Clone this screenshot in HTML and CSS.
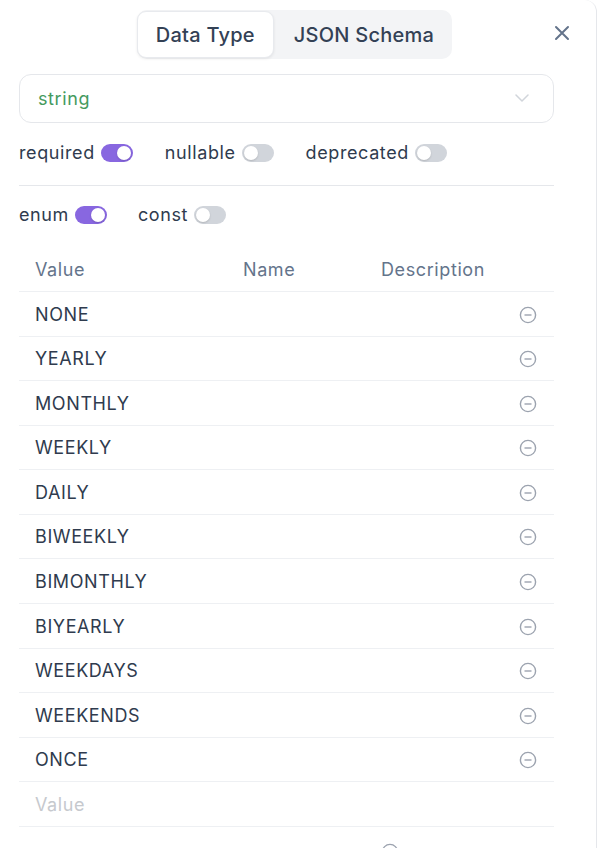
FILE: index.html
```html
<!DOCTYPE html>
<html>
<head>
<meta charset="utf-8">
<link rel="stylesheet" href="styles.css">
</head>
<body>
<div class="panel">
  <div class="header">
    <div class="tabs">
      <div class="tab active">Data Type</div>
      <div class="tab">JSON Schema</div>
    </div>
    <div class="close">
      <svg width="16" height="16" viewBox="0 0 16 16"><path d="M2 2 L14 14 M14 2 L2 14" stroke="#64748b" stroke-width="2" stroke-linecap="round" fill="none"/></svg>
    </div>
  </div>

  <div class="select">
    <span class="select-value">string</span>
    <svg width="14" height="8" viewBox="0 0 14 8"><path d="M1 1 L7 7 L13 1" stroke="#d1d5db" stroke-width="1.5" fill="none" stroke-linecap="round" stroke-linejoin="round"/></svg>
  </div>

  <div class="flags">
    <div class="flag"><span>required</span><span class="toggle on"><span class="knob"></span></span></div>
    <div class="flag"><span>nullable</span><span class="toggle"><span class="knob"></span></span></div>
    <div class="flag"><span>deprecated</span><span class="toggle"><span class="knob"></span></span></div>
  </div>
  <div class="divider"></div>
  <div class="flags second">
    <div class="flag"><span>enum</span><span class="toggle on"><span class="knob"></span></span></div>
    <div class="flag"><span>const</span><span class="toggle"><span class="knob"></span></span></div>
  </div>

  <div class="table">
    <div class="row head">
      <div class="cell">Value</div>
      <div class="cell">Name</div>
      <div class="cell">Description</div>
      <div class="cell"></div>
    </div>
    <div class="row"><div class="cell">NONE</div><div class="cell"></div><div class="cell"></div><div class="cell act"><svg class="minus" viewBox="0 0 18 18"><circle cx="9" cy="9" r="7.6"/><path d="M5.5 9 H12.5"/></svg></div></div>
    <div class="row"><div class="cell">YEARLY</div><div class="cell"></div><div class="cell"></div><div class="cell act"><svg class="minus" viewBox="0 0 18 18"><circle cx="9" cy="9" r="7.6"/><path d="M5.5 9 H12.5"/></svg></div></div>
    <div class="row"><div class="cell">MONTHLY</div><div class="cell"></div><div class="cell"></div><div class="cell act"><svg class="minus" viewBox="0 0 18 18"><circle cx="9" cy="9" r="7.6"/><path d="M5.5 9 H12.5"/></svg></div></div>
    <div class="row"><div class="cell">WEEKLY</div><div class="cell"></div><div class="cell"></div><div class="cell act"><svg class="minus" viewBox="0 0 18 18"><circle cx="9" cy="9" r="7.6"/><path d="M5.5 9 H12.5"/></svg></div></div>
    <div class="row"><div class="cell">DAILY</div><div class="cell"></div><div class="cell"></div><div class="cell act"><svg class="minus" viewBox="0 0 18 18"><circle cx="9" cy="9" r="7.6"/><path d="M5.5 9 H12.5"/></svg></div></div>
    <div class="row"><div class="cell">BIWEEKLY</div><div class="cell"></div><div class="cell"></div><div class="cell act"><svg class="minus" viewBox="0 0 18 18"><circle cx="9" cy="9" r="7.6"/><path d="M5.5 9 H12.5"/></svg></div></div>
    <div class="row"><div class="cell">BIMONTHLY</div><div class="cell"></div><div class="cell"></div><div class="cell act"><svg class="minus" viewBox="0 0 18 18"><circle cx="9" cy="9" r="7.6"/><path d="M5.5 9 H12.5"/></svg></div></div>
    <div class="row"><div class="cell">BIYEARLY</div><div class="cell"></div><div class="cell"></div><div class="cell act"><svg class="minus" viewBox="0 0 18 18"><circle cx="9" cy="9" r="7.6"/><path d="M5.5 9 H12.5"/></svg></div></div>
    <div class="row"><div class="cell">WEEKDAYS</div><div class="cell"></div><div class="cell"></div><div class="cell act"><svg class="minus" viewBox="0 0 18 18"><circle cx="9" cy="9" r="7.6"/><path d="M5.5 9 H12.5"/></svg></div></div>
    <div class="row"><div class="cell">WEEKENDS</div><div class="cell"></div><div class="cell"></div><div class="cell act"><svg class="minus" viewBox="0 0 18 18"><circle cx="9" cy="9" r="7.6"/><path d="M5.5 9 H12.5"/></svg></div></div>
    <div class="row"><div class="cell">ONCE</div><div class="cell"></div><div class="cell"></div><div class="cell act"><svg class="minus" viewBox="0 0 18 18"><circle cx="9" cy="9" r="7.6"/><path d="M5.5 9 H12.5"/></svg></div></div>
    <div class="row"><div class="cell placeholder">Value</div><div class="cell"></div><div class="cell"></div><div class="cell"></div></div>
  </div>
  <div class="footer">
    <svg class="add" viewBox="0 0 18 18"><circle cx="9" cy="9" r="7.6"/></svg>
  </div>
</div>
</body>
</html>
```

FILE: styles.css
```css
* { box-sizing: border-box; }
html, body { margin: 0; padding: 0; background: #ffffff; }
body {
  font-family: Inter, "Noto Sans", "Liberation Sans", sans-serif;
  font-size: 18px;
  letter-spacing: 0.6px;
  color: #2f3b4e;
  overflow: hidden;
}
.panel {
  width: 597px;
  height: 848px;
  border-right: 1px solid #e5e7eb;
  border-top-right-radius: 12px;
  padding: 10px 42px 0 19px;
  overflow: hidden;
}
.header {
  display: grid;
  grid-template-columns: 1fr auto 1fr;
  align-items: center;
  margin-right: -16px;
}
.tabs {
  grid-column: 2;
  display: flex;
  background: #f3f4f6;
  border-radius: 10px;
  padding: 1px 0 1px 0;
  height: 49px;
}
.tab {
  display: flex;
  align-items: center;
  padding: 0 18px;
  font-size: 20px;
  letter-spacing: 0.25px;
  font-weight: 500;
  color: #334155;
  line-height: 24px;
  padding-top: 1px;
}
.tab.active {
  background: #ffffff;
  border: 1px solid #e8eaee;
  border-radius: 9px;
  box-shadow: 0 1px 3px rgba(0,0,0,0.08);
  margin-right: 2px;
}
.close {
  grid-column: 3;
  justify-self: end;
  display: flex;
  margin-top: -4px;
}
.close svg { display: block; }

.select {
  margin-top: 15px;
  height: 49px;
  border: 1px solid #e5e7eb;
  border-radius: 12px;
  display: flex;
  align-items: center;
  justify-content: space-between;
  padding: 0 24px 0 18px;
}
.select-value { color: #459a5e; }
.select svg { display: block; margin-top: -1px; }

.flags {
  display: flex;
  gap: 32px;
  margin-top: 18px;
  height: 24px;
  align-items: center;
}
.flags.second { margin-top: 17px; gap: 31px; }
.flag {
  display: flex;
  align-items: center;
  gap: 6px;
  line-height: 24px;
}
.toggle {
  width: 32px;
  height: 18px;
  border-radius: 9px;
  background: #d1d5db;
  display: flex;
  align-items: center;
  padding: 2px;
}
.toggle.on {
  background: #8867e0;
  justify-content: flex-end;
}
.knob {
  width: 14px;
  height: 14px;
  border-radius: 50%;
  background: #ffffff;
  box-shadow: 0 1px 2px rgba(0,0,0,0.15);
}
.divider {
  height: 1px;
  background: #e5e7eb;
  margin-top: 20px;
}

.table { margin-top: 21px; }
.row {
  display: grid;
  grid-template-columns: 208px 138px 1fr 60px;
  height: 44.58px;
  border-bottom: 1px solid #eef0f3;
  align-items: center;
  padding-top: 1.5px;
}
.row.head { height: 44px; color: #64748b; }
.cell { padding-left: 16px; line-height: 24px; }
.cell.act {
  display: flex;
  justify-content: flex-end;
  padding-right: 17px;
}
.placeholder { color: #c6c9ce; }
.minus {
  width: 18px;
  height: 18px;
  display: block;
  fill: none;
  stroke: #9ca3af;
  stroke-width: 1.4;
}
.footer {
  padding-left: 362px;
  padding-top: 16px;
}
.add {
  width: 18px;
  height: 18px;
  display: block;
  fill: none;
  stroke: #9ca3af;
  stroke-width: 1.4;
}
```
